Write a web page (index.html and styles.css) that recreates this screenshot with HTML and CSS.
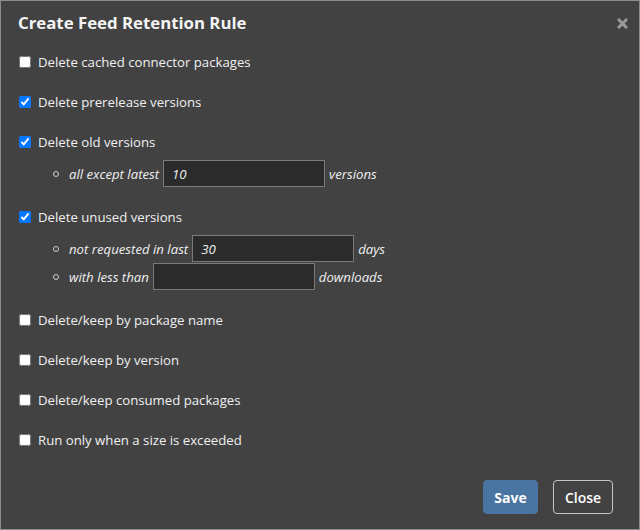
FILE: index.html
```html
<!DOCTYPE html>
<html>
<head>
<meta charset="utf-8">
<link rel="stylesheet" href="styles.css">
</head>
<body>
<div class="dialog">
  <div class="header">
    <h1 class="title">Create Feed Retention Rule</h1>
    <span class="close-x" aria-label="close">
      <svg width="11" height="11" viewBox="0 0 11 11"><path d="M1 1 L10 10 M10 1 L1 10" stroke="#9a9a9a" stroke-width="3" stroke-linecap="butt"/></svg>
    </span>
  </div>
  <div class="body">
    <div class="option"><label class="check"><input type="checkbox"><span>Delete cached connector packages</span></label></div>
    <div class="option"><label class="check"><input type="checkbox" checked><span>Delete prerelease versions</span></label></div>
    <div class="option">
      <label class="check"><input type="checkbox" checked><span>Delete old versions</span></label>
      <ul class="sub">
        <li><span class="bullet"></span><em>all except latest</em><input class="num" type="text" value="10"><em>versions</em></li>
      </ul>
    </div>
    <div class="option">
      <label class="check"><input type="checkbox" checked><span>Delete unused versions</span></label>
      <ul class="sub">
        <li><span class="bullet"></span><em>not requested in last</em><input class="num" type="text" value="30"><em>days</em></li>
        <li><span class="bullet"></span><em>with less than</em><input class="num" type="text" value=""><em>downloads</em></li>
      </ul>
    </div>
    <div class="option"><label class="check"><input type="checkbox"><span>Delete/keep by package name</span></label></div>
    <div class="option"><label class="check"><input type="checkbox"><span>Delete/keep by version</span></label></div>
    <div class="option"><label class="check"><input type="checkbox"><span>Delete/keep consumed packages</span></label></div>
    <div class="option"><label class="check"><input type="checkbox"><span>Run only when a size is exceeded</span></label></div>
  </div>
  <div class="footer">
    <button class="btn btn-save">Save</button>
    <button class="btn btn-close">Close</button>
  </div>
</div>
</body>
</html>
```
FILE: styles.css
```css
* { box-sizing: border-box; }
html, body { margin: 0; padding: 0; }
body {
  font-family: "Open Sans", "Noto Sans", sans-serif;
  font-size: 13.2px;
  color: #f0f0f0;
  background: #424242;
}
.dialog {
  width: 640px;
  height: 530px;
  border: 1px solid #8c8c8c;
  background: #424242;
  display: flex;
  flex-direction: column;
}
.header {
  display: flex;
  justify-content: space-between;
  align-items: center;
  padding: 4px 11px 0 17px;
  height: 40px;
}
.title {
  margin: 0;
  font-size: 16.8px;
  font-weight: 700;
  line-height: 22px;
  color: #f4f4f4;
}
.close-x { display: flex; width: 11px; height: 11px; margin-top: 1px; }
.body {
  padding: 11px 0 0 14px;
}
.option { margin-bottom: 20px; }
.check {
  display: flex;
  align-items: center;
  height: 20px;
  line-height: 20px;
}
.check input {
  margin: 0 7px 0 4px;
  width: 12px;
  height: 12px;
}
.sub {
  list-style: none;
  margin: 8px 0 0 0;
  padding: 0 0 0 38px;
  display: flex;
  flex-direction: column;
  gap: 1px;
}
.sub li {
  display: flex;
  align-items: center;
  height: 27px;
}
.bullet {
  width: 6px;
  height: 6px;
  border: 1px solid #cfcfcf;
  border-radius: 50%;
  margin-right: 10px;
}
.sub em {
  font-style: italic;
  color: #f0f0f0;
}
.num {
  width: 162px;
  height: 27px;
  margin: 0 4px;
  padding: 0 8px;
  background: #2b2b2b;
  border: 1px solid #7a7a7a;
  color: #f0f0f0;
  font-family: inherit;
  font-size: 13.2px;
  font-style: italic;
  outline: none;
}
.footer {
  margin-top: auto;
  display: flex;
  justify-content: flex-end;
  gap: 15px;
  padding: 0 26px 15px 0;
}
.btn {
  font-family: inherit;
  font-size: 14px;
  font-weight: 700;
  height: 34px;
  border-radius: 4px;
  color: #fff;
  cursor: pointer;
}
.btn-save {
  width: 55px;
  background: #4a74a2;
  border: 1px solid #4a74a2;
}
.btn-close {
  width: 60px;
  background: transparent;
  border: 1.5px solid #c4c4c4;
  font-weight: 600;
}
```
